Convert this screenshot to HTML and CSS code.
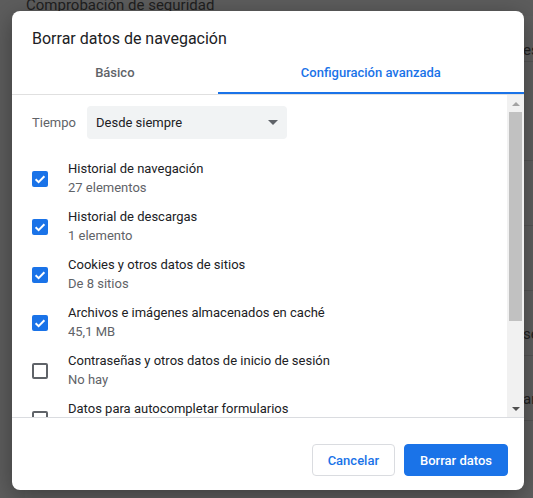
FILE: index.html
```html
<!DOCTYPE html>
<html lang="es">
<head>
<meta charset="utf-8">
<title>Borrar datos de navegación</title>
<link rel="stylesheet" href="styles.css">
</head>
<body>
<div class="bg-page">
  <div class="bg-heading">Comprobación de seguridad</div>
  <div class="bg-card">
    <div class="bg-row bg-row-a"><span class="bg-text bg-text-top">es</span></div>
    <div class="bg-row bg-row-b"></div>
    <div class="bg-row"></div>
    <div class="bg-row"></div>
    <div class="bg-row"><span class="bg-text">se</span></div>
    <div class="bg-row"><span class="bg-text">ar</span></div>
  </div>
</div>

<div class="dialog">
  <div class="dialog-title">Borrar datos de navegación</div>
  <div class="tabs">
    <div class="tab">Básico</div>
    <div class="tab tab-active">Configuración avanzada</div>
  </div>
  <div class="dialog-body">
    <div class="content">
      <div class="time-row">
        <span class="time-label">Tiempo</span>
        <div class="select">
          <span>Desde siempre</span>
          <span class="select-arrow"></span>
        </div>
      </div>
      <div class="item">
        <span class="checkbox checked"><svg viewBox="0 0 16 16" width="16" height="16"><path d="M3.6 8.2 L6.6 11.1 L12.4 5.3" fill="none" stroke="#fff" stroke-width="2"/></svg></span>
        <div class="item-text">
          <div class="item-title">Historial de navegación</div>
          <div class="item-sub">27 elementos</div>
        </div>
      </div>
      <div class="item">
        <span class="checkbox checked"><svg viewBox="0 0 16 16" width="16" height="16"><path d="M3.6 8.2 L6.6 11.1 L12.4 5.3" fill="none" stroke="#fff" stroke-width="2"/></svg></span>
        <div class="item-text">
          <div class="item-title">Historial de descargas</div>
          <div class="item-sub">1 elemento</div>
        </div>
      </div>
      <div class="item">
        <span class="checkbox checked"><svg viewBox="0 0 16 16" width="16" height="16"><path d="M3.6 8.2 L6.6 11.1 L12.4 5.3" fill="none" stroke="#fff" stroke-width="2"/></svg></span>
        <div class="item-text">
          <div class="item-title">Cookies y otros datos de sitios</div>
          <div class="item-sub">De 8 sitios</div>
        </div>
      </div>
      <div class="item">
        <span class="checkbox checked"><svg viewBox="0 0 16 16" width="16" height="16"><path d="M3.6 8.2 L6.6 11.1 L12.4 5.3" fill="none" stroke="#fff" stroke-width="2"/></svg></span>
        <div class="item-text">
          <div class="item-title">Archivos e imágenes almacenados en caché</div>
          <div class="item-sub">45,1 MB</div>
        </div>
      </div>
      <div class="item">
        <span class="checkbox"></span>
        <div class="item-text">
          <div class="item-title">Contraseñas y otros datos de inicio de sesión</div>
          <div class="item-sub">No hay</div>
        </div>
      </div>
      <div class="item">
        <span class="checkbox"></span>
        <div class="item-text">
          <div class="item-title">Datos para autocompletar formularios</div>
          <div class="item-sub">&nbsp;</div>
        </div>
      </div>
    </div>
    <div class="scrollbar">
      <div class="sb-btn"><span class="sb-up"></span></div>
      <div class="sb-track"><div class="sb-thumb"></div></div>
      <div class="sb-btn"><span class="sb-down"></span></div>
    </div>
  </div>
  <div class="dialog-footer">
    <button class="btn btn-cancel">Cancelar</button>
    <button class="btn btn-primary">Borrar datos</button>
  </div>
</div>
</body>
</html>
```
FILE: styles.css
```css
* { box-sizing: border-box; }

html, body {
  margin: 0;
  padding: 0;
  height: 498px;
  overflow: hidden;
}

body {
  background: #5d5d5d;
  font-family: Roboto, "Liberation Sans", Arial, sans-serif;
  color: #202124;
}

/* dimmed page behind the dialog */
.bg-page {
  padding-left: 26px;
  height: 498px;
  overflow: hidden;
}

.bg-heading {
  font-size: 15px;
  line-height: 18px;
  margin-top: -4px;
  color: #1f1f1f;
}

.bg-card {
  margin-left: -1px;
  margin-top: 2px;
  background: #5f5f5f;
  height: 482px;
  overflow: hidden;
}

.bg-row {
  height: 65px;
  border-bottom: 1px solid #555;
  overflow: hidden;
}

.bg-row-a { height: 46px; }
.bg-row-b { height: 99px; }

.bg-text {
  display: block;
  padding-left: 498px;
  padding-top: 34px;
  font-size: 15px;
  color: #222;
  white-space: nowrap;
}

.bg-text-top { padding-top: 25px; }

/* dialog */
.dialog {
  position: absolute;
  left: 12px;
  top: 11px;
  width: 512px;
  height: 479px;
  background: #fff;
  border-radius: 8px;
  box-shadow: 0 6px 24px rgba(0, 0, 0, 0.35);
  display: flex;
  flex-direction: column;
  overflow: hidden;
}

.dialog-title {
  padding: 18px 20px 0;
  font-size: 16px;
  line-height: 20px;
  color: #202124;
}

.tabs {
  display: flex;
  margin-top: 4px;
  border-bottom: 1px solid #e0e0e0;
}

.tab {
  flex: 1 1 auto;
  height: 41px;
  display: flex;
  align-items: center;
  justify-content: center;
  padding-bottom: 1px;
  font-size: 13px;
  font-weight: 500;
  color: #5f6368;
  border-bottom: 2px solid transparent;
}

.tab-active {
  color: #1a73e8;
  border-bottom-color: #1a73e8;
}

.dialog-body {
  display: flex;
  height: 322px;
  flex-shrink: 0;
}

.content {
  flex: 1;
  overflow: hidden;
  padding: 11px 0 0 20px;
}

.time-row {
  display: flex;
  align-items: center;
  height: 33px;
}

.time-label {
  width: 55px;
  flex-shrink: 0;
  font-size: 13px;
  color: #5f6368;
}

.select {
  width: 200px;
  height: 33px;
  background: #f1f3f4;
  border-radius: 4px;
  display: flex;
  align-items: center;
  justify-content: space-between;
  padding: 0 9px;
  font-size: 13px;
  color: #202124;
}

.select-arrow {
  width: 0;
  height: 0;
  border-left: 5px solid transparent;
  border-right: 5px solid transparent;
  border-top: 5px solid #5f6368;
}

.item {
  display: flex;
  align-items: center;
  height: 48px;
}

.time-row + .item { margin-top: 16px; }

.checkbox {
  width: 16px;
  height: 16px;
  flex-shrink: 0;
  border: 2px solid #5f6368;
  border-radius: 2px;
  margin-right: 20px;
  display: flex;
}

.checkbox.checked {
  border: none;
  background: #1a73e8;
}

.item-text {
  margin-top: -2px;
  font-size: 13px;
  line-height: 19px;
}

.item-title { color: #202124; }
.item-sub { color: #5f6368; }

/* scrollbar */
.scrollbar {
  width: 17px;
  flex-shrink: 0;
  background: #f1f1f1;
  display: flex;
  flex-direction: column;
}

.sb-btn {
  height: 17px;
  display: flex;
  align-items: center;
  justify-content: center;
  flex-shrink: 0;
}

.sb-up {
  width: 0;
  height: 0;
  border-left: 4px solid transparent;
  border-right: 4px solid transparent;
  border-bottom: 4px solid #a3a3a3;
}

.sb-down {
  width: 0;
  height: 0;
  border-left: 4px solid transparent;
  border-right: 4px solid transparent;
  border-top: 4px solid #505050;
}

.sb-track {
  flex: 1;
  padding: 0 2px;
}

.sb-thumb {
  height: 209px;
  background: #c1c1c1;
}

/* footer */
.dialog-footer {
  border-top: 1px solid #dadce0;
  display: flex;
  justify-content: flex-end;
  gap: 9px;
  padding: 26px 16px 0 0;
}

.btn {
  height: 32px;
  padding: 0 15px;
  border-radius: 4px;
  font-family: inherit;
  font-size: 13px;
  font-weight: 500;
  cursor: pointer;
}

.btn-cancel {
  background: #fff;
  color: #1a73e8;
  border: 1px solid #dadce0;
}

.btn-primary {
  background: #1a73e8;
  color: #fff;
  border: 1px solid #1a73e8;
}
```
